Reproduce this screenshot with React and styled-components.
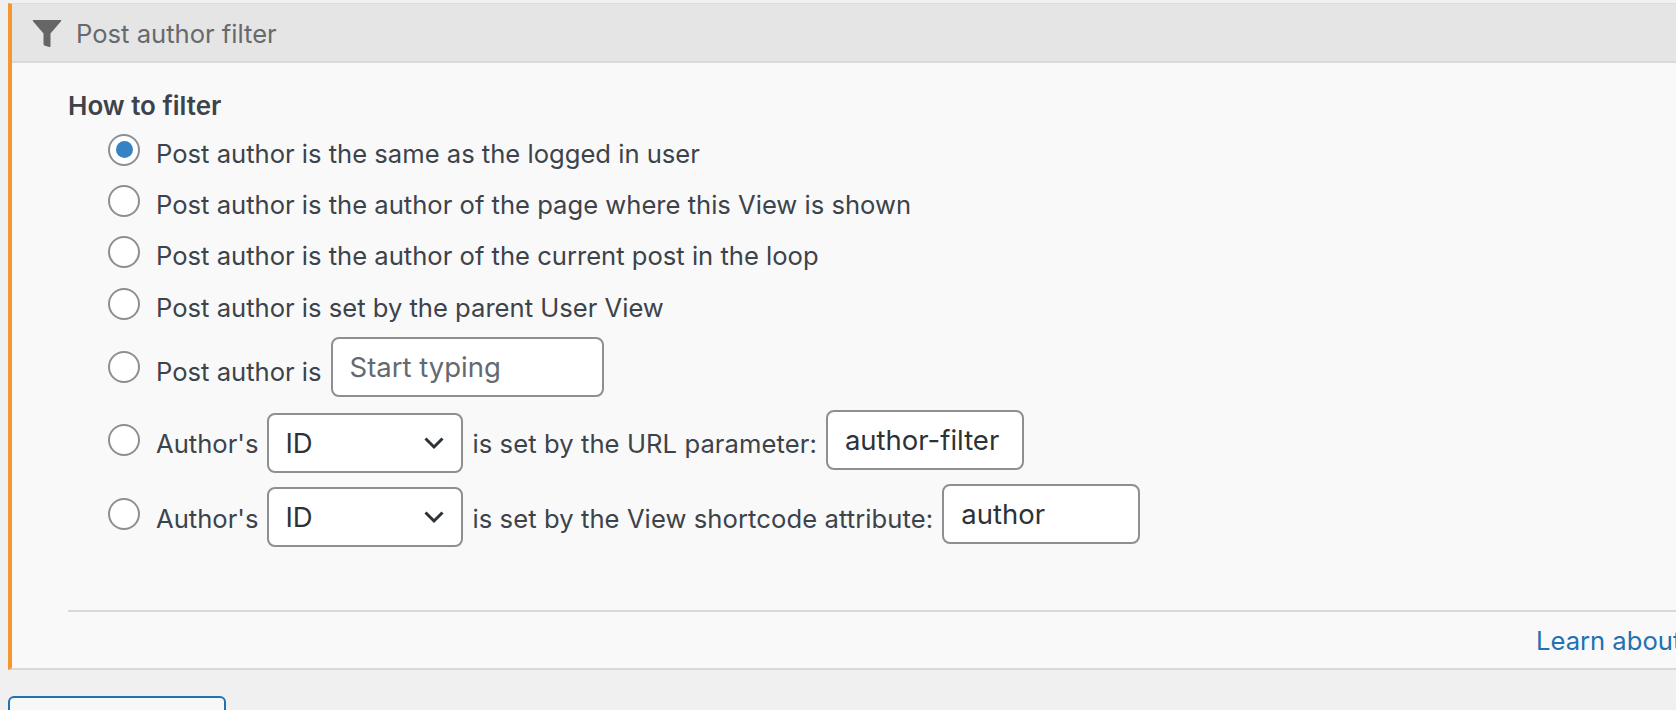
import React from "react";
import styled, { createGlobalStyle } from "styled-components";

const Global = createGlobalStyle`
  html, body {
    margin: 0;
    height: 710px;
    overflow: hidden;
    background: #f0f0f1;
  }
  body {
    font-family: Inter, "Liberation Sans", sans-serif;
    color: #3c434a;
  }
`;

const Page = styled.div`
  padding: 3px 0 0 8px;
  width: 1800px;
`;

const Panel = styled.section`
  border-top: 1px solid #dcdcde;
  border-bottom: 2px solid #d9d9d9;
  border-left: 4px solid #f6962f;
  background: #f9f9f9;
`;

const Header = styled.header`
  display: flex;
  align-items: center;
  gap: 14px;
  height: 55px;
  padding: 2px 0 0 20px;
  background: #e5e5e5;
  border-bottom: 2px solid #d9d9d9;
  font-size: 25.6px;
  color: #666a6e;
`;

const Body = styled.div`
  padding: 21px 0 0 56px;
`;

const Heading = styled.div`
  font-size: 26px;
  line-height: 44px;
  font-weight: 600;
  color: #3c434a;
`;

const Options = styled.div`
  display: flex;
  flex-direction: column;
  padding-left: 40px;
  margin-top: -4px;
`;

const Row = styled.label`
  display: flex;
  align-items: center;
  gap: 9px;
  height: ${(p) => p.$height}px;
  font-size: 25.6px;
`;

const Radio = styled.span`
  flex: none;
  box-sizing: border-box;
  width: 32px;
  height: 32px;
  margin-right: 7px;
  border: 2px solid #8c8f94;
  border-radius: 50%;
  background: #fff;
  display: flex;
  align-items: center;
  justify-content: center;

  &::after {
    content: "";
    display: ${(p) => (p.$checked ? "block" : "none")};
    width: 17px;
    height: 17px;
    border-radius: 50%;
    background: #3582c4;
  }
`;

const Text = styled.span`
  white-space: nowrap;
  position: relative;
  top: 4px;
  letter-spacing: ${(p) => p.$spacing || 0}px;
`;

const Input = styled.input`
  box-sizing: border-box;
  width: ${(p) => p.$width}px;
  height: 60px;
  padding: 0 17px;
  border: 2px solid #8c8f94;
  border-radius: 8px;
  background: #fff;
  font: 27.5px Inter, "Liberation Sans", sans-serif;
  color: #2c3338;

  &::placeholder {
    color: #646970;
    opacity: 1;
  }
`;

const Select = styled.div`
  box-sizing: border-box;
  display: flex;
  align-items: center;
  justify-content: space-between;
  width: 196px;
  height: 60px;
  padding: 0 16px;
  border: 2px solid #8c8f94;
  border-radius: 8px;
  background: #fff;
  font-size: 27.5px;
  color: #2c3338;
  position: relative;
  top: 3px;
`;

const Rule = styled.hr`
  border: 0;
  height: 2px;
  margin: 57px 0 0;
  background: #d9d9d9;
`;

const Footer = styled.div`
  height: 56px;
  padding-left: 1468px;
  display: flex;
  align-items: center;
`;

const Link = styled.a`
  color: #2271b1;
  font-size: 25.6px;
  white-space: nowrap;
  text-decoration: none;
`;

const Actions = styled.div`
  padding-top: 26px;
`;

const Button = styled.button`
  display: block;
  width: 218px;
  height: 60px;
  border: 2px solid #2271b1;
  border-radius: 6px;
  background: #f6f7f7;
`;

const FunnelIcon = () => (
  <svg width="30" height="30" viewBox="0 0 30 30" aria-hidden="true">
    <path
      d="M1.5 1h27c.8 0 1 .7.5 1.3L18.5 14.5V27c0 .8-.5 1.3-1.2 1.1l-4.3-1.3c-.9-.3-1.5-1-1.5-1.8V14.5L1 2.3C.5 1.7.7 1 1.5 1z"
      fill="#666666"
    />
  </svg>
);

const Chevron = () => (
  <svg width="22" height="14" viewBox="0 0 22 14" aria-hidden="true">
    <path d="M2.5 2.5 11 11l8.5-8.5" fill="none" stroke="#2c3338" strokeWidth="3" />
  </svg>
);

const AuthorSelect = () => (
  <Select>
    ID
    <Chevron />
  </Select>
);

export default function App() {
  return (
    <Page>
      <Global />
      <Panel>
        <Header>
          <FunnelIcon />
          Post author filter
        </Header>
        <Body>
          <Heading>How to filter</Heading>
          <Options>
            <Row $height={51}>
              <Radio $checked />
              <Text>Post author is the same as the logged in user</Text>
            </Row>
            <Row $height={51}>
              <Radio />
              <Text>Post author is the author of the page where this View is shown</Text>
            </Row>
            <Row $height={51}>
              <Radio />
              <Text>Post author is the author of the current post in the loop</Text>
            </Row>
            <Row $height={53}>
              <Radio />
              <Text>Post author is set by the parent User View</Text>
            </Row>
            <Row $height={74}>
              <Radio />
              <Text>Post author is</Text>
              <Input $width={273} placeholder="Start typing" readOnly />
            </Row>
            <Row $height={71}>
              <Radio />
              <Text>Author's</Text>
              <AuthorSelect />
              <Text $spacing={0.08}>is set by the URL parameter:</Text>
              <Input $width={198} defaultValue="author-filter" readOnly />
            </Row>
            <Row $height={78}>
              <Radio />
              <Text>Author's</Text>
              <AuthorSelect />
              <Text $spacing={0.08}>is set by the View shortcode attribute:</Text>
              <Input $width={198} defaultValue="author" readOnly />
            </Row>
          </Options>
          <Rule />
          <Footer>
            <Link href="#">Learn about</Link>
          </Footer>
        </Body>
      </Panel>
      <Actions>
        <Button />
      </Actions>
    </Page>
  );
}
